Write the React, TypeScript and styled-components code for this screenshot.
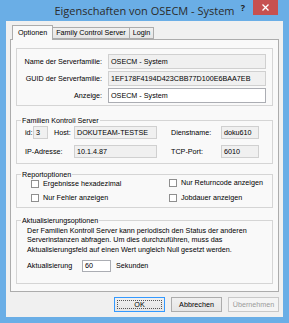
import React from "react";
import styled, { createGlobalStyle } from "styled-components";

const Global = createGlobalStyle`
  html, body { margin: 0; padding: 0; background: #ffffff; }
  body { font-family: "Liberation Sans", Arial, sans-serif; -webkit-font-smoothing: antialiased; }
  * { box-sizing: border-box; }
`;

const Window = styled.div`
  width: 289px;
  height: 323px;
  background: #6aaee6;
  padding: 0 6px 6px 6px;
  display: flex;
  flex-direction: column;
`;

const TitleBar = styled.div`
  height: 21px;
  flex: none;
  display: grid;
  grid-template-columns: 1fr auto 1fr;
  align-items: start;
`;

const Title = styled.div`
  grid-column: 2;
  font-family: "Open Sans", "Noto Sans", sans-serif;
  font-size: 11px;
  line-height: 21px;
  color: #2b2b2b;
  white-space: nowrap;
`;

const Controls = styled.div`
  grid-column: 3;
  display: flex;
  justify-content: flex-end;
  align-items: flex-start;
`;

const Help = styled.span`
  font-family: "Open Sans", "Noto Sans", sans-serif;
  font-weight: 700;
  font-size: 9px;
  line-height: 15px;
  color: #1e1e1e;
  margin-right: 8px;
`;

const Close = styled.div`
  width: 25px;
  height: 15px;
  margin-right: 5px;
  background: #c75050;
  display: flex;
  align-items: center;
  justify-content: center;
`;

const Client = styled.div`
  flex: 1;
  background: #f0f0f0;
  padding: 4px 4px 0 4px;
  display: flex;
  flex-direction: column;
`;

const TabStrip = styled.div`
  height: 14px;
  display: flex;
  align-items: flex-end;
  padding-left: 2px;
`;

const Tab = styled.div<{ $active?: boolean }>`
  position: relative;
  z-index: ${(p) => (p.$active ? 1 : 0)};
  height: ${(p) => (p.$active ? 15 : 12)}px;
  margin-bottom: ${(p) => (p.$active ? -1 : 0)}px;
  padding: 0 ${(p) => (p.$active ? 5 : 3)}px;
  border: 1px solid #acacac;
  border-bottom: ${(p) => (p.$active ? "none" : "1px solid #acacac")};
  border-left: ${(p) => (p.$active ? "1px solid #acacac" : "none")};
  background: ${(p) => (p.$active ? "#f9f9f9" : "linear-gradient(#f0f0f0, #e5e5e5)")};
  font-size: 7.2px;
  line-height: ${(p) => (p.$active ? 13 : 10)}px;
  color: #000;
  white-space: nowrap;
`;

const Panel = styled.div`
  height: 253px;
  border: 1px solid #acacac;
  background: #f9f9f9;
  display: flex;
  flex-direction: column;
  padding: 0 5px;
`;

const PlainGroup = styled.div`
  margin-top: 8px;
  height: 58px;
  border: 1px solid #d5d5d5;
  padding: 5px 6px 0 0;
  display: grid;
  grid-template-columns: 85px 1fr;
  grid-auto-rows: 15px;
  column-gap: 6px;
  row-gap: 2px;
  align-items: center;
`;

const Group = styled.fieldset<{ $h: number; $mt: number }>`
  margin: ${(p) => p.$mt}px 0 0 0;
  padding: 0;
  min-width: 0;
  height: ${(p) => p.$h}px;
  border: 1px solid #d5d5d5;
`;

const Legend = styled.legend`
  font-size: 7.2px;
  line-height: 9px;
  padding: 0 1px;
  margin-left: 4px;
  color: #000;
`;

const Label = styled.span<{ $align?: string; $pl?: number; $span?: string }>`
  font-size: 7.2px;
  line-height: 9px;
  color: #000;
  white-space: nowrap;
  text-align: ${(p) => p.$align || "left"};
  padding-left: ${(p) => p.$pl || 0}px;
  grid-column: ${(p) => p.$span || "auto"};
`;

const Field = styled.div<{ $editable?: boolean }>`
  height: 100%;
  border: 1px solid ${(p) => (p.$editable ? "#abadb3" : "#d0d0d0")};
  background: ${(p) => (p.$editable ? "#ffffff" : "#f0f0f0")};
  padding-left: 2px;
  font-size: 7.2px;
  color: #000;
  display: flex;
  align-items: center;
  white-space: nowrap;
  overflow: hidden;
`;

const ServerGrid = styled.div`
  display: grid;
  grid-template-columns: 8px 15px 26px 83px 64px 38px;
  grid-template-rows: 13px 13px;
  row-gap: 6px;
  padding: 1px 0 0 8px;
  align-items: center;
`;

const CheckGrid = styled.div`
  display: grid;
  grid-template-columns: 138px 1fr;
  grid-template-rows: 9px 9px;
  row-gap: 5px;
  padding: 0 0 0 14px;
`;

const CheckItem = styled.label<{ $raise?: number }>`
  display: flex;
  align-items: center;
  gap: 4px;
  margin-top: ${(p) => -(p.$raise || 0)}px;
  font-size: 7.2px;
  line-height: 9px;
  color: #000;
  white-space: nowrap;
`;

const Box = styled.span`
  width: 8px;
  height: 8px;
  flex: none;
  border: 1px solid #8f8f8f;
  background: #ffffff;
`;

const Paragraph = styled.div`
  padding: 1px 0 0 10px;
  font-size: 7.2px;
  line-height: 9.3px;
  color: #000;
  white-space: nowrap;
`;

const IntervalRow = styled.div`
  display: flex;
  align-items: center;
  height: 12px;
  margin-top: 6px;
  padding-left: 10px;
  gap: 5px;
`;

const IntervalLabel = styled(Label)`
  width: 50px;
`;

const SmallInput = styled(Field)`
  width: 29px;
  flex: none;
`;

const ButtonRow = styled.div`
  display: flex;
  justify-content: flex-end;
  gap: 6px;
  margin-top: 5px;
`;

const Button = styled.div<{ $default?: boolean; $disabled?: boolean }>`
  width: 51px;
  height: 15px;
  display: flex;
  align-items: center;
  justify-content: center;
  font-size: 7.2px;
  color: ${(p) => (p.$disabled ? "#9a9a9a" : "#000")};
  border: 1px solid ${(p) => (p.$default ? "#3399ff" : p.$disabled ? "#c8c8c8" : "#acacac")};
  background: ${(p) => (p.$disabled ? "#f4f4f4" : "linear-gradient(#f0f0f0, #e5e5e5)")};
  position: relative;
`;

const Focus = styled.span`
  position: absolute;
  inset: 2px;
  border: 1px dotted #555;
`;

export default function App() {
  return (
    <>
      <Global />
      <Window>
        <TitleBar>
          <Title>Eigenschaften von OSECM - System</Title>
          <Controls>
            <Help>?</Help>
            <Close>
              <svg width="7" height="7" viewBox="0 0 7 7">
                <path d="M0.5 0.5 L6.5 6.5 M6.5 0.5 L0.5 6.5" stroke="#ffffff" strokeWidth="1.3" />
              </svg>
            </Close>
          </Controls>
        </TitleBar>
        <Client>
          <TabStrip>
            <Tab $active>Optionen</Tab>
            <Tab>Family Control Server</Tab>
            <Tab>Login</Tab>
          </TabStrip>
          <Panel>
            <PlainGroup>
              <Label $align="right">Name der Serverfamilie:</Label>
              <Field>OSECM - System</Field>
              <Label $align="right">GUID der Serverfamilie:</Label>
              <Field>1EF178F4194D423CBB77D100E6BAA7EB</Field>
              <Label $align="right">Anzeige:</Label>
              <Field $editable>OSECM - System</Field>
            </PlainGroup>

            <Group $h={48} $mt={10}>
              <Legend>Familien Kontroll Server</Legend>
              <ServerGrid>
                <Label>id:</Label>
                <Field>3</Field>
                <Label $pl={6}>Host:</Label>
                <Field>DOKUTEAM-TESTSE</Field>
                <Label $pl={14}>Dienstname:</Label>
                <Field>doku610</Field>
                <Label $span="1 / 4">IP-Adresse:</Label>
                <Field>10.1.4.87</Field>
                <Label $pl={14}>TCP-Port:</Label>
                <Field>6010</Field>
              </ServerGrid>
            </Group>

            <Group $h={38} $mt={6}>
              <Legend>Reportoptionen</Legend>
              <CheckGrid>
                <CheckItem><Box />Ergebnisse hexadezimal</CheckItem>
                <CheckItem $raise={2}><Box />Nur Returncode anzeigen</CheckItem>
                <CheckItem><Box />Nur Fehler anzeigen</CheckItem>
                <CheckItem><Box />Jobdauer anzeigen</CheckItem>
              </CheckGrid>
            </Group>

            <Group $h={68} $mt={8}>
              <Legend>Aktualisierungsoptionen</Legend>
              <Paragraph>
                Der Familien Kontroll Server kann periodisch den Status der anderen
                <br />
                Serverinstanzen abfragen. Um dies durchzuführen, muss das
                <br />
                Aktualisierungsfeld auf einen Wert ungleich Null gesetzt werden.
              </Paragraph>
              <IntervalRow>
                <IntervalLabel>Aktualisierung</IntervalLabel>
                <SmallInput $editable>60</SmallInput>
                <Label>Sekunden</Label>
              </IntervalRow>
            </Group>
          </Panel>
          <ButtonRow>
            <Button $default>
              <Focus />
              OK
            </Button>
            <Button>Abbrechen</Button>
            <Button $disabled>Übernehmen</Button>
          </ButtonRow>
        </Client>
      </Window>
    </>
  );
}
